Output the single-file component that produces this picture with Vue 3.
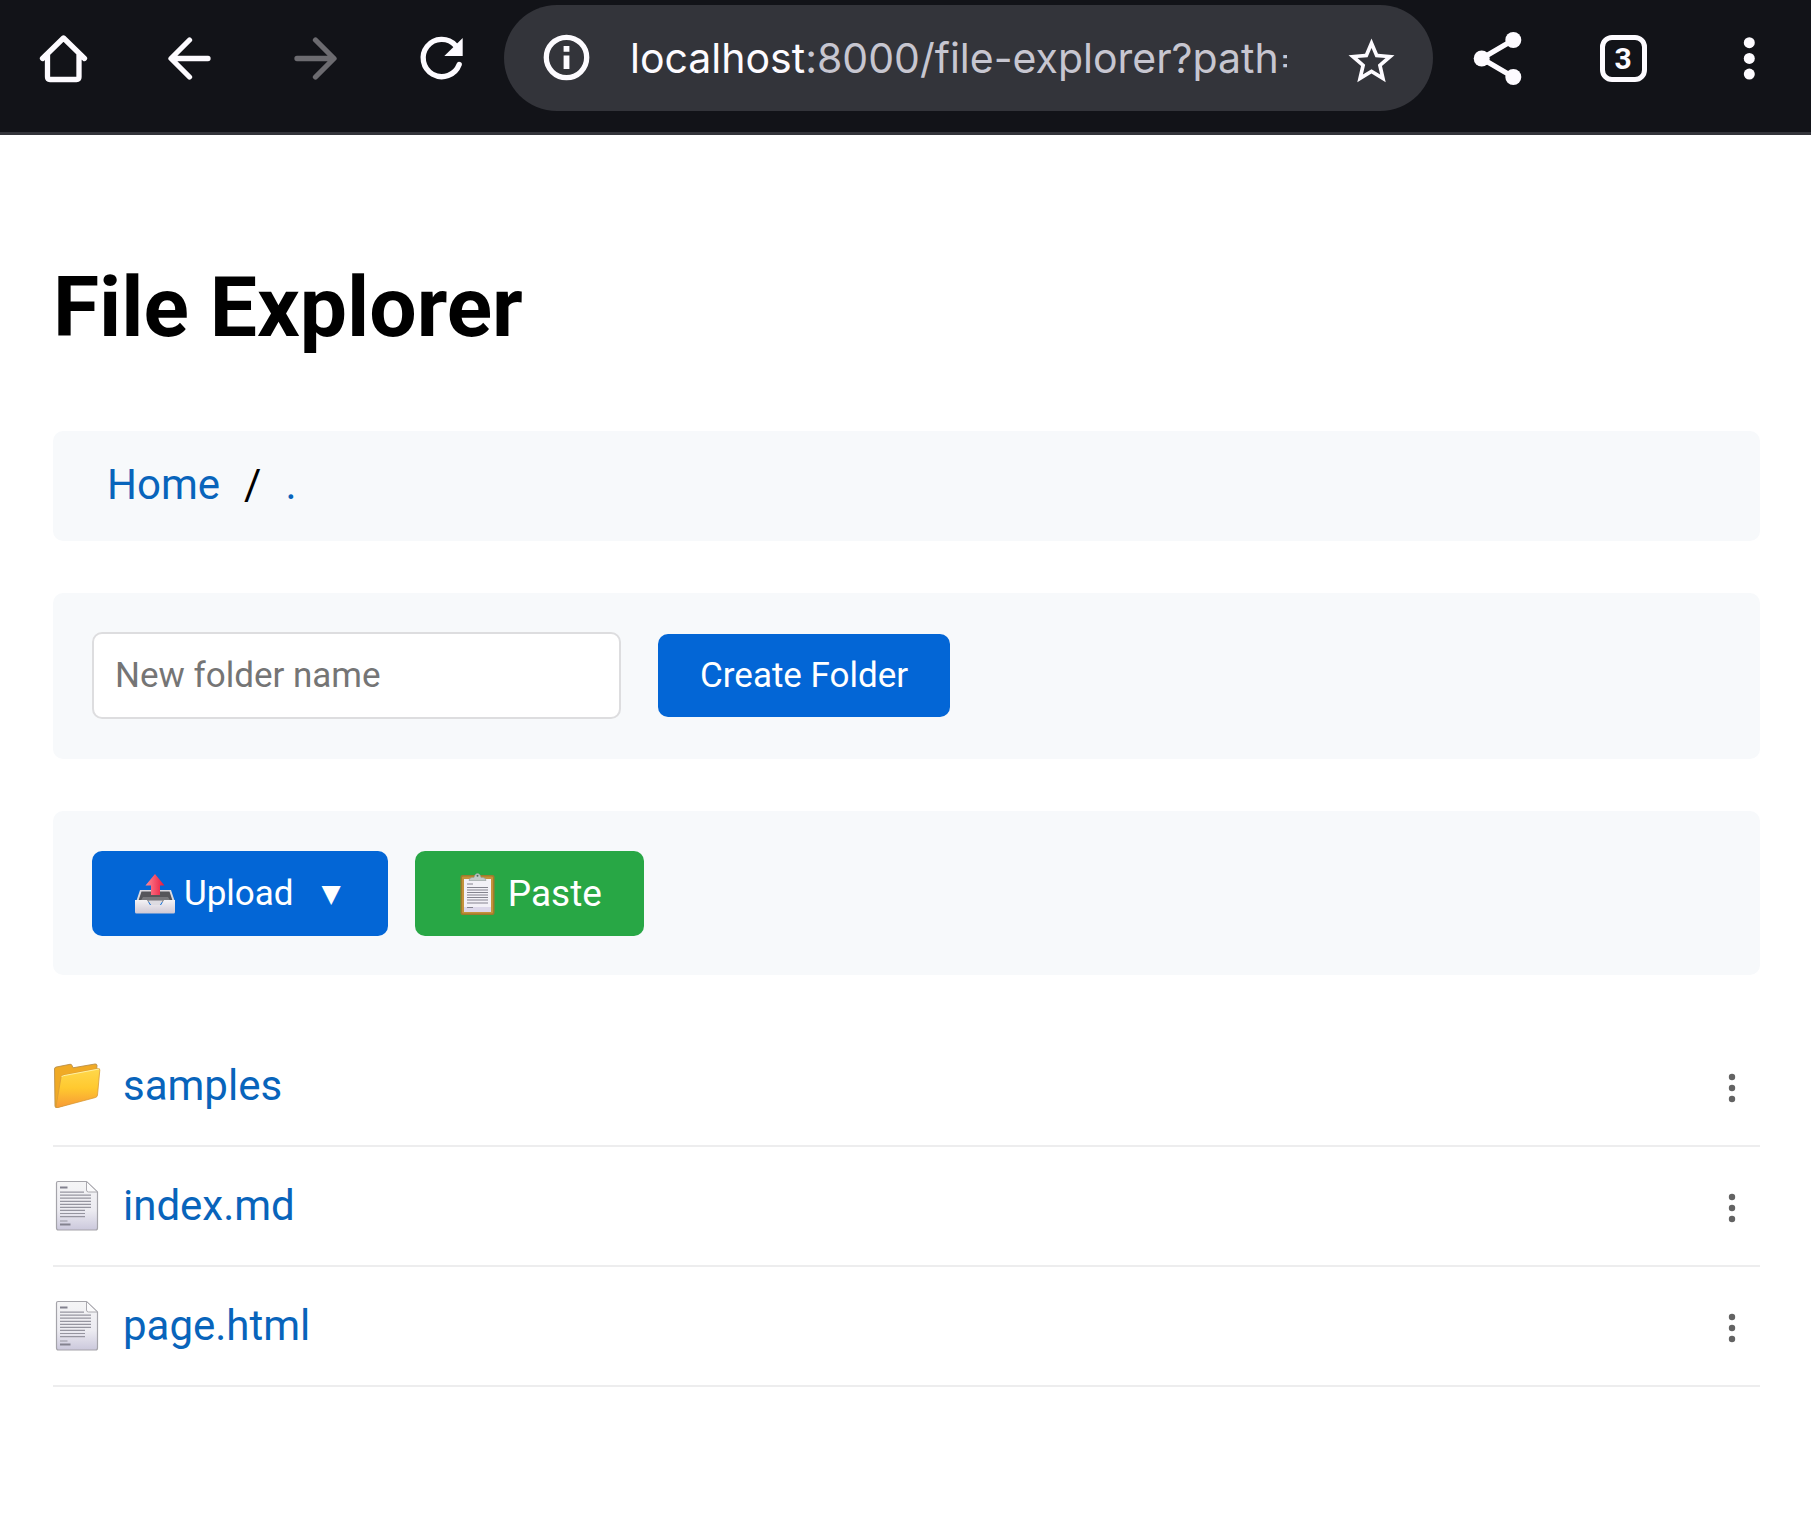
<script setup>
import { ref } from 'vue'

const folderName = ref('')
const entries = [
  { name: 'samples', kind: 'folder' },
  { name: 'index.md', kind: 'file' },
  { name: 'page.html', kind: 'file' },
]
</script>

<template>
  <header class="toolbar">
    <button class="tool" aria-label="Home">
      <svg class="glyph" viewBox="0 0 64 64">
        <path class="line" d="M11.5 32.5 32.5 12l21 20.5M16.5 29v22q0 2.500 2.500 2.500h26.500q2.500 0 2.500-2.500V29" />
      </svg>
    </button>
    <button class="tool" aria-label="Back">
      <svg class="glyph" viewBox="0 0 64 64">
        <path class="line" d="M32.500 14 14 32.500l18.500 18.500M15 32.500h36" />
      </svg>
    </button>
    <button class="tool dim" aria-label="Forward" disabled>
      <svg class="glyph" viewBox="0 0 64 64">
        <path class="line" d="M32.500 14 51 32.500 32.500 51M50 32.500H14" />
      </svg>
    </button>
    <button class="tool" aria-label="Reload">
      <svg class="glyph" viewBox="0 0 64 64">
        <path class="line" d="M46.500 19.500A18.600 18.600 0 1 0 50.200 38.500" />
        <path class="solid" d="M53.700 12v18H35.300z" />
      </svg>
    </button>

    <div class="address">
      <button class="tool" aria-label="Site information">
        <svg class="glyph" viewBox="0 0 64 64">
          <circle class="line" cx="31.500" cy="31.500" r="20.200" />
          <path class="solid" d="M28.600 20h5.800v5.700h-5.800zM28.600 29.500h5.800V43h-5.800z" />
        </svg>
      </button>
      <div class="url"><span class="host">localhost</span>:8000/file-explorer?path=</div>
      <button class="tool" aria-label="Bookmark">
        <svg class="glyph" viewBox="0 0 64 64">
          <path
            class="solid"
            transform="translate(5.900 7.900) scale(2.300)"
            d="M22 9.240l-7.190-.620L12 2 9.190 8.630 2 9.240l5.460 4.730L5.820 21 12 17.270 18.180 21l-1.630-7.030L22 9.240zM12 15.400l-3.760 2.270 1-4.280-3.320-2.880 4.380-.380L12 6.100l1.710 4.040 4.380.380-3.320 2.880 1 4.280L12 15.400z"
          />
        </svg>
      </button>
    </div>

    <button class="tool" aria-label="Share">
      <svg class="glyph" viewBox="0 0 64 64">
        <path class="line" d="M49.300 14 17.700 32.500l31.600 18.500" />
        <circle class="solid" cx="17.700" cy="32.500" r="8" />
        <circle class="solid" cx="49.300" cy="14" r="8" />
        <circle class="solid" cx="49.300" cy="51" r="8" />
      </svg>
    </button>
    <button class="tool" aria-label="Open tabs"><span class="tabs">3</span></button>
    <button class="tool" aria-label="Menu">
      <svg class="glyph" viewBox="0 0 64 64">
        <circle class="solid" cx="33.300" cy="16.700" r="5.500" />
        <circle class="solid" cx="33.300" cy="32.400" r="5.500" />
        <circle class="solid" cx="33.300" cy="48.100" r="5.500" />
      </svg>
    </button>
  </header>

  <main class="page">
    <h1>File Explorer</h1>

    <nav class="panel crumbs" aria-label="Breadcrumb">
      <a href="#">Home</a><span>/</span><a href="#">.</a>
    </nav>

    <form class="panel create" @submit.prevent>
      <input v-model="folderName" type="text" placeholder="New folder name" aria-label="New folder name" />
      <button class="btn" type="submit">Create Folder</button>
    </form>

    <div class="panel actions">
      <button class="btn tall" type="button">
        <svg class="emoji" viewBox="0 0 42 42">
          <defs>
            <linearGradient id="tray" x1="0" y1="0" x2="0" y2="1">
              <stop offset="0" stop-color="#f4f3f6" />
              <stop offset="1" stop-color="#cfc8d4" />
            </linearGradient>
            <linearGradient id="arrow" x1="0" y1="0" x2="1" y2="0">
              <stop offset="0" stop-color="#ff8a96" />
              <stop offset="1" stop-color="#e8173c" />
            </linearGradient>
          </defs>
          <path d="M6 17h31l4 12H2z" fill="#dcdbe0" />
          <path d="M7.500 18.500h28l3 9H4.500z" fill="#55565a" />
          <path d="M9 24h25l3 5H6z" fill="#77787c" />
          <path d="M1 27h12l3 5h11l3-5h11v12q0 1.500-1.500 1.500h-37Q1 40.500 1 39z" fill="url(#tray)" />
          <path d="M14 27h15l-3 4h-9z" fill="#a8a6ac" />
          <path d="M14.500 28h14l-2.500 4h-9z" fill="#dddbe1" />
          <path d="M21 1l9.500 11.500H26V22h-9V12.500h-5.500z" fill="url(#arrow)" />
        </svg>
        <span class="upload">Upload</span>
        <span class="caret">▼</span>
      </button>
      <button class="btn tall green" type="button">
        <svg class="emoji" viewBox="0 0 42 42">
          <rect x="3.500" y="2" width="34" height="40" rx="2" fill="#a07a2c" />
          <rect x="5" y="3.500" width="31" height="37" rx="1" fill="#c4923a" />
          <path d="M7 6h27v33H7z" fill="#f3f1f7" />
          <path d="M7 34h27v5H7z" fill="#ddd8ea" />
          <path d="M12 7.500q0-2.500 3-3h2q1-4 3.500-4t3.500 4h2q3 .500 3 3z" fill="#c3cbc9" stroke="#929b99" stroke-width=".600" />
          <circle cx="20.500" cy="2.800" r="1" fill="#4f6b5a" />
          <path
            d="M10 11h6M10 14.500h21M10 17h21M10 19.500h21M10 22h21M10 24.500h21M10 27h21M10 30h21M10 34.500h6"
            stroke="#85848f"
            stroke-width="1.200"
          />
        </svg>
        <span class="paste">Paste</span>
      </button>
    </div>

    <ul class="files">
      <li v-for="entry in entries" :key="entry.name">
        <svg v-if="entry.kind === 'folder'" class="kind" viewBox="0 0 48 52">
          <defs>
            <linearGradient id="front" x1="0" y1="0" x2="0" y2="1">
              <stop offset="0" stop-color="#ffd84c" />
              <stop offset=".500" stop-color="#ffc92f" />
              <stop offset="1" stop-color="#f79a36" />
            </linearGradient>
          </defs>
          <path d="M1.500 9q0-1.500 1.500-1.900L17 4.300q1.500-.300 2 1.200l1 2.300L42 4q1.700-.200 2 1.200L42 36 4 47.500q-2 .500-2-1.500z" fill="#f0aa25" stroke="#b9904b" stroke-width=".900" />
          <path d="M8 17.500q.200-1.900 2-2.300L45 8.500q2-.300 1.800 1.700L44.500 35q-.200 2-2 2.500L5 47.500q-2 .500-1.900-1.500z" fill="url(#front)" stroke="#d99a35" stroke-width=".800" />
          <path d="M8.500 17q.500-1 2-1.300L46 9" fill="none" stroke="#fff0a0" stroke-width="1" />
        </svg>
        <svg v-else class="kind" viewBox="0 0 48 52">
          <defs>
            <linearGradient id="sheet" x1="0" y1="0" x2="0" y2="1">
              <stop offset="0" stop-color="#f5f5f6" />
              <stop offset=".600" stop-color="#ecebf1" />
              <stop offset="1" stop-color="#cbc8dc" />
            </linearGradient>
          </defs>
          <path d="M5 1.500h28.500L44.500 12v36q0 2-2 2H5.500q-2 0-2-2V3q0-1.500 1.500-1.500z" fill="url(#sheet)" stroke="#a5a4aa" stroke-width="1.200" />
          <path d="M33.500 1.500V10q0 2 2 2h9z" fill="#fbfbfc" stroke="#aaa9af" stroke-width="1" />
          <path d="M7 12.200h24M7 15.200h31M7 18.200h31M7 21.300h31M7 24.300h31M7 27.400h31M7 30.400h25M7 33.500h25M7 36.600h25M7 41h7.500" stroke="#9695a0" stroke-width="1.200" />
          <path d="M7 7.500h7.500M7 44.500h10.500" stroke="#83828f" stroke-width="2" />
        </svg>
        <a href="#">{{ entry.name }}</a>
        <button class="more" type="button" :aria-label="`Actions for ${entry.name}`">
          <svg viewBox="0 0 8 30" width="8" height="30">
            <circle cx="4" cy="4" r="3.200" />
            <circle cx="4" cy="15" r="3.200" />
            <circle cx="4" cy="26" r="3.200" />
          </svg>
        </button>
      </li>
    </ul>
  </main>
</template>

<style>
body {
  margin: 0;
  background: #fff;
}
</style>

<style scoped>
* {
  box-sizing: border-box;
}

.toolbar,
.page {
  font-family: Roboto, "Noto Sans", sans-serif;
}

button {
  margin: 0;
  padding: 0;
  border: 0;
  background: none;
  font-family: inherit;
}

.toolbar {
  display: flex;
  padding: 5px 0 21px;
  background: #121318;
  border-bottom: 3px solid #33343a;
  color: #fdfbff;
}

.tool {
  display: flex;
  flex: none;
  align-items: center;
  justify-content: center;
  width: 126px;
  height: 106px;
  color: #fdfbff;
}

.tool.dim {
  color: #6c6b70;
}

.glyph {
  width: 64px;
  height: 64px;
}

.line {
  fill: none;
  stroke: currentColor;
  stroke-width: 5.3;
  stroke-linecap: round;
  stroke-linejoin: round;
}

.solid {
  fill: currentColor;
}

.address {
  display: flex;
  flex: 1;
  align-items: center;
  min-width: 0;
  border-radius: 53px;
  background: #33343a;
}

.url {
  flex: 1;
  min-width: 0;
  margin-right: 20px;
  overflow: hidden;
  color: #c7c6d0;
  font-family: Inter, Roboto, sans-serif;
  font-size: 41px;
  line-height: 56px;
  white-space: nowrap;
}

.host {
  color: #fdfbff;
}

.tabs {
  width: 47px;
  height: 47px;
  margin-left: 2px;
  border: 5px solid currentColor;
  border-radius: 12px;
  font-size: 30px;
  font-weight: 700;
  line-height: 38px;
  text-align: center;
}

.page {
  padding: 124px 51px 100px 53px;
  color: #000;
  font-size: 42px;
  line-height: 49px;
}

h1 {
  margin: 0 0 74px;
  font-size: 84px;
  line-height: 98px;
}

a {
  color: #0864bb;
  text-decoration: none;
}

.panel {
  display: flex;
  align-items: center;
  margin-bottom: 52px;
  border-radius: 10px;
  background: #f7f9fb;
}

.crumbs {
  gap: 24px;
  padding: 29px 54px 32px;
}

.create {
  gap: 37px;
  padding: 39px 39px 40px;
}

input {
  width: 529px;
  height: 87px;
  padding: 0 21px;
  border: 2px solid #dddddf;
  border-radius: 10px;
  background: #fff;
  font-family: inherit;
  font-size: 35px;
}

input::placeholder {
  color: #757575;
}

.btn {
  display: flex;
  align-items: center;
  height: 83px;
  padding: 0 42px;
  border-radius: 10px;
  background: #0366d6;
  color: #fff;
  font-size: 35px;
  line-height: 42px;
}

.btn.tall {
  height: 85px;
}

.btn.green {
  background: #28a745;
}

.actions {
  gap: 27px;
  padding: 40px 39px 39px;
}

.emoji {
  width: 42px;
  height: 42px;
}

.upload {
  margin-left: 8px;
}

.caret {
  margin: 0 5px 0 28px;
  font-family: "DejaVu Sans", sans-serif;
  font-size: 25px;
}

.paste {
  margin-left: 9px;
  font-size: 37px;
}

.files {
  margin: 0;
  padding: 0;
  list-style: none;
}

.files li {
  display: flex;
  align-items: center;
  height: 120px;
  border-bottom: 2px solid #ededee;
}

.files a {
  padding-bottom: 2px;
}

.kind {
  width: 48px;
  height: 52px;
  margin-right: 22px;
}

.more {
  display: flex;
  align-items: center;
  justify-content: center;
  width: 56px;
  height: 60px;
  margin: 4px 0 0 auto;
  fill: #636363;
}
</style>
